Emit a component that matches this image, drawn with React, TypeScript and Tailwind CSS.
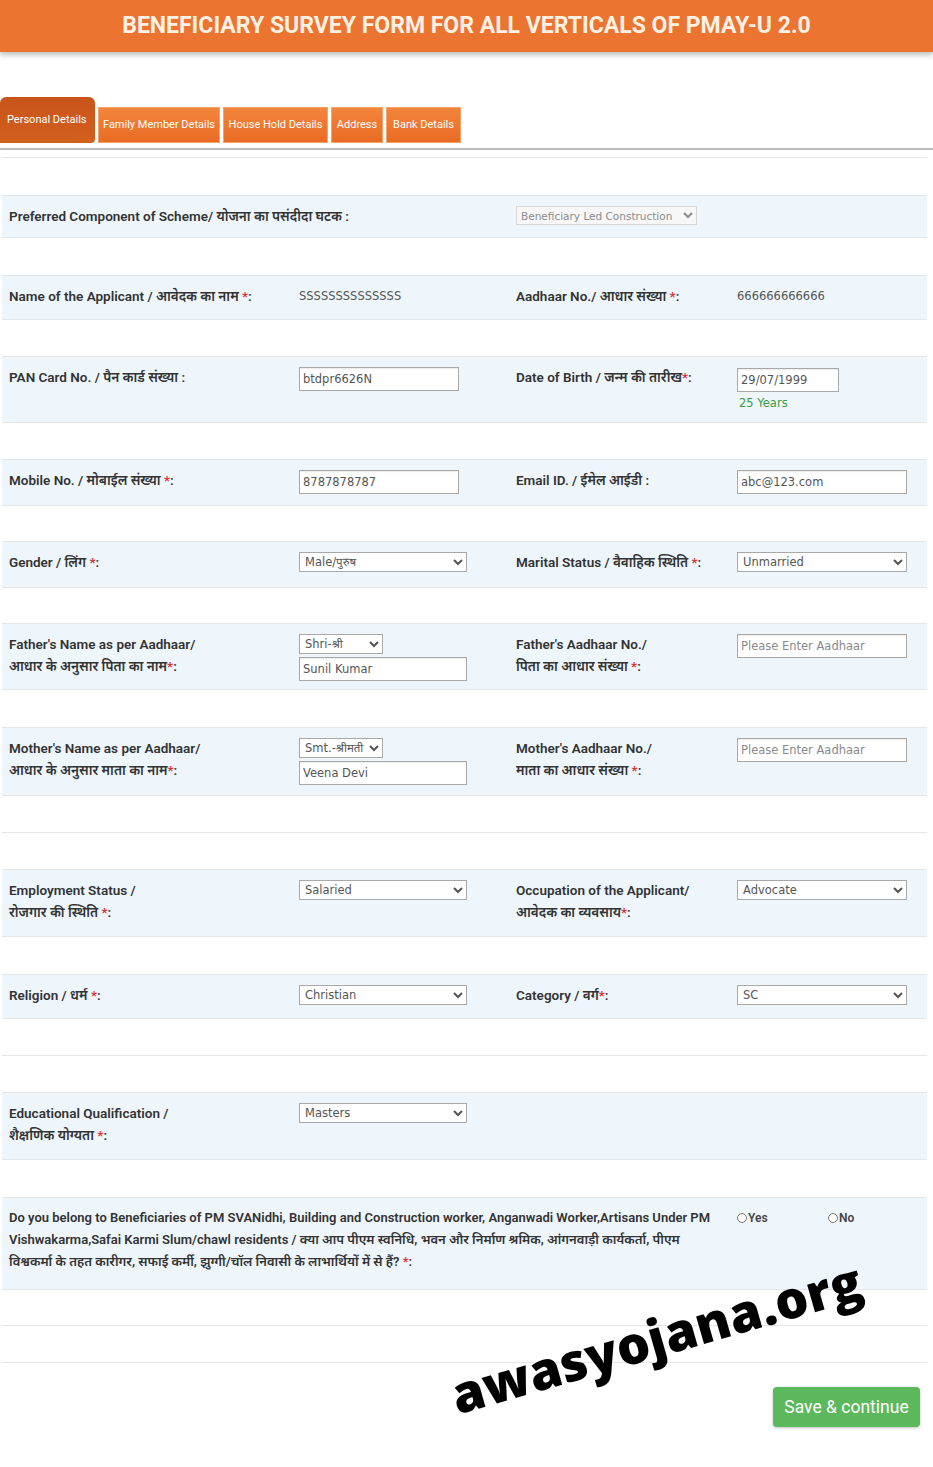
import React from "react"

const labelFont = "font-['Roboto','Noto_Sans_Devanagari','Noto_Sans',sans-serif]"
const fieldFont = "font-['DejaVu_Sans','Noto_Sans_Devanagari',sans-serif]"

function Star() {
  return <span className="text-[#e03131]">*</span>
}

function Label({ children, size = "text-[13.5px]" }: { children: React.ReactNode; size?: string }) {
  return <div className={`${labelFont} ${size} font-semibold leading-[22px] text-[#333]`}>{children}</div>
}

function TextBox({ value, placeholder, w = "w-[160px]" }: { value?: string; placeholder?: string; w?: string }) {
  return (
    <input
      readOnly
      defaultValue={value}
      placeholder={placeholder}
      className={`${fieldFont} ${w} h-[24px] mt-[1px] border border-[#a8a8a8] bg-white px-[3px] text-[11.5px] text-[#555] placeholder:text-[#8a8a8a] shadow-[inset_0_1px_1px_rgba(0,0,0,0.08)] outline-none`}
    />
  )
}

function Select({ value, w = "w-[168px]" }: { value: string; w?: string }) {
  return (
    <select
      defaultValue={value}
      className={`${fieldFont} ${w} h-[20px] mt-[1px] border border-[#a8a8a8] bg-white pl-[1px] text-[11.5px] text-[#555] outline-none`}
    >
      <option value={value}>{value}</option>
    </select>
  )
}

function Blank({ h = "h-[38px]" }: { h?: string }) {
  return <div className={`${h} border-t border-[#e4e7ea] bg-white`} />
}

function Row({ h, children }: { h: string; children: React.ReactNode }) {
  return (
    <div
      className={`${h} border-t border-[#e4e7ea] bg-[#eef6fc] pl-[7px] pt-[9px] grid grid-cols-[290px_217px_221px_1fr] items-start`}
    >
      {children}
    </div>
  )
}

const tabs = [
  { name: "Family Member Details", w: "w-[122px]" },
  { name: "House Hold Details", w: "w-[105px]" },
  { name: "Address", w: "w-[52px]" },
  { name: "Bank Details", w: "w-[75px]" },
]

export default function App() {
  return (
    <div className="relative w-[933px] min-h-[1467px] bg-white overflow-hidden">
      {/* header */}
      <div className="h-[52px] bg-[#ec7431] shadow-[0_3px_5px_rgba(0,0,0,0.25)] flex items-center justify-center">
        <h1 className="font-['Roboto',sans-serif] font-bold text-[23px] text-[#fdf1e4]">
          BENEFICIARY SURVEY FORM FOR ALL VERTICALS OF PMAY-U 2.0
        </h1>
      </div>

      {/* tabs */}
      <div className="mt-[45px] flex items-end gap-[3px] border-b-2 border-[#bdbdbd] pb-[5px]">
        <div className="w-[95px] h-[46px] rounded-t-[6px] rounded-br-[4px] bg-gradient-to-b from-[#c9541a] to-[#d2601f] pt-[15px] pl-[7px] font-['Roboto',sans-serif] text-[11px] text-white">
          Personal Details
        </div>
        {tabs.map((t) => (
          <div
            key={t.name}
            className={`${t.w} h-[36px] bg-gradient-to-b from-[#f3853d] to-[#e96b22] border border-[#f5a36b] flex items-center justify-center font-['Roboto',sans-serif] text-[11px] text-white`}
          >
            {t.name}
          </div>
        ))}
      </div>

      {/* form */}
      <div className="ml-[2px] mt-[7px] w-[925px] border-b border-[#e4e7ea]">
        <Blank />
        <Row h="h-[42px]">
          <div className="col-span-2">
            <Label>Preferred Component of Scheme/ योजना का पसंदीदा घटक :</Label>
          </div>
          <select
            disabled
            defaultValue="blc"
            className={`${fieldFont} w-[181px] h-[19px] mt-[1px] border border-[#d6d6d6] bg-[#f7f7f7] pl-0 text-[10.5px] text-[#8c8c8c]`}
          >
            <option value="blc">Beneficiary Led Construction</option>
          </select>
        </Row>
        <Blank />
        <Row h="h-[44px]">
          <Label>
            Name of the Applicant / आवेदक का नाम <Star />:
          </Label>
          <div className={`${fieldFont} text-[11.5px] leading-[22px] text-[#555]`}>SSSSSSSSSSSSSS</div>
          <Label>
            Aadhaar No./ आधार संख्या <Star />:
          </Label>
          <div className={`${fieldFont} text-[11.5px] leading-[22px] text-[#555]`}>666666666666</div>
        </Row>
        <Blank h="h-[37px]" />
        <Row h="h-[66px]">
          <Label>PAN Card No. / पैन कार्ड संख्या :</Label>
          <TextBox value="btdpr6626N" />
          <Label>
            Date of Birth / जन्म की तारीख<Star />:
          </Label>
          <div>
            <TextBox value="29/07/1999" w="w-[102px]" />
            <div className={`${fieldFont} mt-[3px] pl-[2px] text-[11.5px] leading-[16px] text-[#3d9a3d]`}>25 Years</div>
          </div>
        </Row>
        <Blank h="h-[37px]" />
        <Row h="h-[46px]">
          <Label>
            Mobile No. / मोबाईल संख्या <Star />:
          </Label>
          <TextBox value="8787878787" />
          <Label>Email ID. / ईमेल आईडी :</Label>
          <TextBox value="abc@123.com" w="w-[170px]" />
        </Row>
        <Blank h="h-[36px]" />
        <Row h="h-[46px]">
          <Label>
            Gender / लिंग <Star />:
          </Label>
          <Select value="Male/पुरुष" />
          <Label>
            Marital Status / वैवाहिक स्थिति <Star />:
          </Label>
          <Select value="Unmarried" w="w-[170px]" />
        </Row>
        <Blank h="h-[36px]" />
        <Row h="h-[66px]">
          <Label>
            Father's Name as per Aadhaar/
            <br />
            आधार के अनुसार पिता का नाम<Star />:
          </Label>
          <div className="flex flex-col gap-[2px]">
            <Select value="Shri-श्री" w="w-[84px]" />
            <TextBox value="Sunil Kumar" w="w-[168px]" />
          </div>
          <Label>
            Father's Aadhaar No./
            <br />
            पिता का आधार संख्या <Star />:
          </Label>
          <TextBox placeholder="Please Enter Aadhaar" w="w-[170px]" />
        </Row>
        <Blank />
        <Row h="h-[68px]">
          <Label>
            Mother's Name as per Aadhaar/
            <br />
            आधार के अनुसार माता का नाम<Star />:
          </Label>
          <div className="flex flex-col gap-[2px]">
            <Select value="Smt.-श्रीमती" w="w-[84px]" />
            <TextBox value="Veena Devi" w="w-[168px]" />
          </div>
          <Label>
            Mother's Aadhaar No./
            <br />
            माता का आधार संख्या <Star />:
          </Label>
          <TextBox placeholder="Please Enter Aadhaar" w="w-[170px]" />
        </Row>
        <Blank h="h-[37px]" />
        <Blank h="h-[37px]" />
        <Row h="h-[67px]">
          <Label>
            Employment Status /
            <br />
            रोजगार की स्थिति <Star />:
          </Label>
          <Select value="Salaried" />
          <Label>
            Occupation of the Applicant/
            <br />
            आवेदक का व्यवसाय<Star />:
          </Label>
          <Select value="Advocate" w="w-[170px]" />
        </Row>
        <Blank />
        <Row h="h-[44px]">
          <Label>
            Religion / धर्म <Star />:
          </Label>
          <Select value="Christian" />
          <Label>
            Category / वर्ग<Star />:
          </Label>
          <Select value="SC" w="w-[170px]" />
        </Row>
        <Blank h="h-[37px]" />
        <Blank h="h-[37px]" />
        <Row h="h-[67px]">
          <Label>
            Educational Qualification /
            <br />
            शैक्षणिक योग्यता <Star />:
          </Label>
          <Select value="Masters" />
        </Row>
        <Blank />
        <div className="h-[92px] border-t border-[#e4e7ea] bg-[#eef6fc] pl-[7px] pt-[9px] flex items-start">
          <div className="w-[728px] whitespace-nowrap">
            <Label size="text-[13px]">
              Do you belong to Beneficiaries of PM SVANidhi, Building and Construction worker, Anganwadi Worker,Artisans
              Under PM
              <br />
              Vishwakarma,Safai Karmi Slum/chawl residents / क्या आप पीएम स्वनिधि, भवन और निर्माण श्रमिक, आंगनवाड़ी
              कार्यकर्ता, पीएम
              <br />
              विश्वकर्मा के तहत कारीगर, सफाई कर्मी, झुग्गी/चॉल निवासी के लाभार्थियों में से हैं? <Star />:
            </Label>
          </div>
          <label className={`${labelFont} w-[91px] flex items-center text-[12px] font-semibold text-[#444] leading-[22px]`}>
            <input type="radio" name="pm" className="w-[10px] h-[10px] m-0 mr-[1px]" />
            Yes
          </label>
          <label className={`${labelFont} flex items-center text-[12px] font-semibold text-[#444] leading-[22px]`}>
            <input type="radio" name="pm" className="w-[10px] h-[10px] m-0 mr-[1px]" />
            No
          </label>
        </div>
        <Blank h="h-[36px]" />
        <Blank h="h-[37px]" />
      </div>

      {/* actions */}
      <div className="flex justify-end pr-[13px] pt-[24px]">
        <button className="w-[147px] h-[40px] rounded-[4px] bg-[#5cb85c] shadow-[0_1px_3px_rgba(0,0,0,0.25)] font-['Roboto',sans-serif] text-[17.5px] text-white">
          Save &amp; continue
        </button>
      </div>

      {/* watermark */}
      <div className="absolute left-[656px] top-[1337px] -translate-x-1/2 -translate-y-1/2 -rotate-[16deg] whitespace-nowrap font-['Open_Sans',sans-serif] text-[52px] font-extrabold leading-none text-black">
        awasyojana.org
      </div>
    </div>
  )
}
